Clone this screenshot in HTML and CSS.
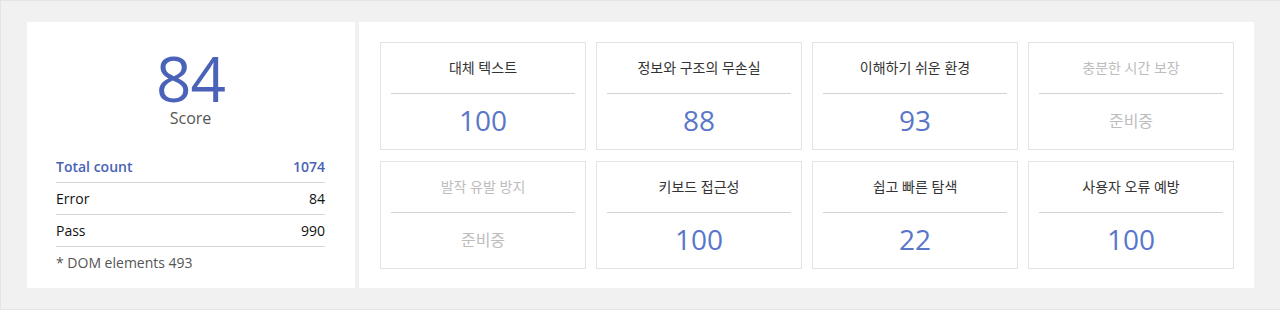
FILE: index.html
```html
<!DOCTYPE html>
<html lang="ko">
<head>
<meta charset="utf-8">
<title>Accessibility report</title>
<link rel="stylesheet" href="styles.css">
</head>
<body>
<div class="report">
  <section class="summary">
    <div class="score">
      <div class="score-value">84</div>
      <div class="score-label">Score</div>
    </div>
    <ul class="counts">
      <li class="count-row total"><span>Total count</span><span>1074</span></li>
      <li class="count-row"><span>Error</span><span>84</span></li>
      <li class="count-row"><span>Pass</span><span>990</span></li>
    </ul>
    <p class="note">* DOM elements 493</p>
  </section>
  <section class="categories">
    <div class="card"><div class="card-title">대체 텍스트</div><div class="card-value">100</div></div>
    <div class="card"><div class="card-title">정보와 구조의 무손실</div><div class="card-value">88</div></div>
    <div class="card"><div class="card-title">이해하기 쉬운 환경</div><div class="card-value">93</div></div>
    <div class="card disabled"><div class="card-title">충분한 시간 보장</div><div class="card-value">준비중</div></div>
    <div class="card disabled"><div class="card-title">발작 유발 방지</div><div class="card-value">준비중</div></div>
    <div class="card"><div class="card-title">키보드 접근성</div><div class="card-value">100</div></div>
    <div class="card"><div class="card-title">쉽고 빠른 탐색</div><div class="card-value">22</div></div>
    <div class="card"><div class="card-title">사용자 오류 예방</div><div class="card-value">100</div></div>
  </section>
</div>
</body>
</html>
```

FILE: styles.css
```css
* { box-sizing: border-box; }

html, body {
  margin: 0;
  padding: 0;
  background: #ffffff;
}

body {
  font-family: "Open Sans", "Noto Sans CJK KR", sans-serif;
  color: #222;
}

.report {
  display: flex;
  gap: 4px;
  width: 1281px;
  height: 310px;
  padding: 21px 26px 21px 26px;
  background: #f1f1f1;
  border: 1px solid #e4e4e4;
}

.summary {
  width: 328px;
  flex: none;
  background: #fff;
  padding: 25px 30px 0 29px;
}

.score {
  text-align: center;
}

.score-value {
  font-size: 62px;
  line-height: 62px;
  color: #4a63b9;
  letter-spacing: -1px;
}

.score-label {
  font-size: 16px;
  line-height: 18px;
  color: #555;
}

.counts {
  list-style: none;
  margin: 24px 0 0;
  padding: 0;
}

.count-row {
  display: flex;
  justify-content: space-between;
  font-size: 14px;
  line-height: 31px;
  border-bottom: 1px solid #d6d6d6;
  color: #111;
}

.count-row.total {
  color: #4a62b6;
  font-weight: 600;
}

.note {
  margin: 0;
  font-size: 14px;
  line-height: 31px;
  color: #555;
}

.categories {
  flex: 1;
  background: #fff;
  padding: 20px 20px 19px 21px;
  display: grid;
  grid-template-columns: repeat(4, 206px);
  grid-template-rows: repeat(2, 108px);
  column-gap: 10px;
  row-gap: 11px;
}

.card {
  border: 1px solid #e3e3e3;
  display: flex;
  flex-direction: column;
  padding: 0 10px;
}

.card-title {
  height: 51px;
  display: flex;
  align-items: center;
  justify-content: center;
  font-size: 14px;
  color: #333;
  border-bottom: 1px solid #d2d2d2;
  padding-bottom: 3px;
}

.card-value {
  flex: 1;
  display: flex;
  align-items: center;
  justify-content: center;
  font-size: 28px;
  color: #5a76c9;
  padding-bottom: 3px;
}

.card.disabled .card-title {
  color: #bdbdbd;
}

.card.disabled .card-value {
  font-size: 16px;
  color: #bdbdbd;
}
```
